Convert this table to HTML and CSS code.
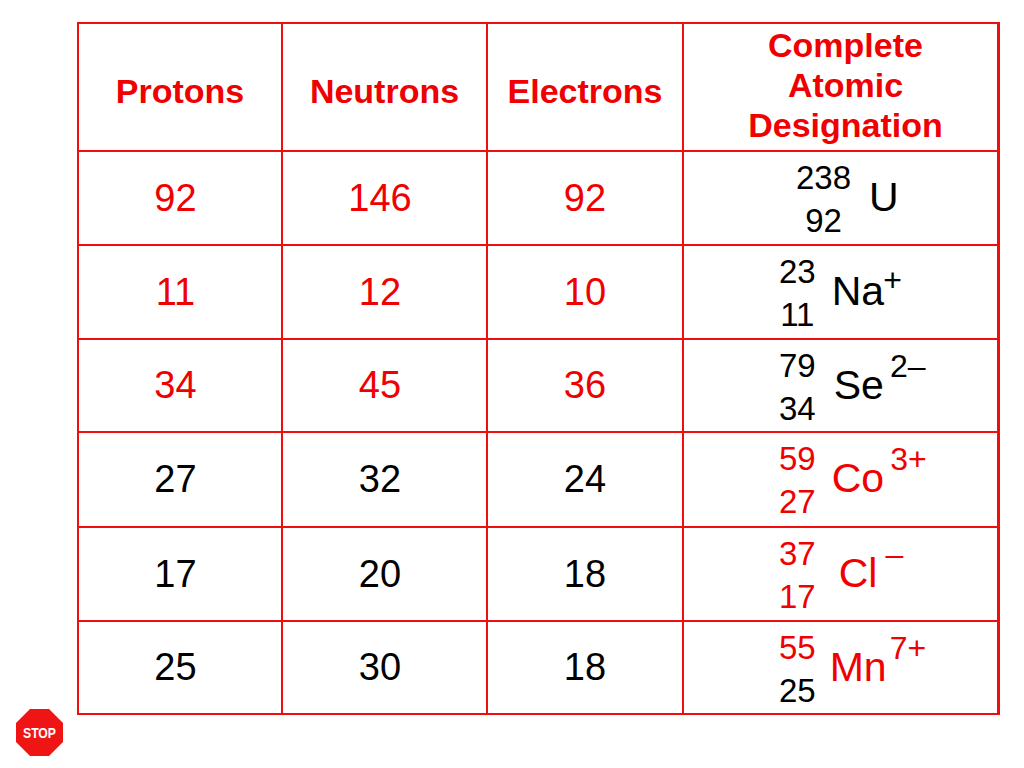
FILE: index.html
```html
<!DOCTYPE html>
<html lang="en">
<head>
<meta charset="utf-8">
<title>Atomic Designation</title>
<link rel="stylesheet" href="styles.css">
</head>
<body>
<div class="slide">
  <div class="grid">
    <div class="cell head">Protons</div>
    <div class="cell head">Neutrons</div>
    <div class="cell head">Electrons</div>
    <div class="cell head head-multi">Complete<br>Atomic<br>Designation</div>

    <div class="cell num shift red">92</div>
    <div class="cell num shift red">146</div>
    <div class="cell num red">92</div>
    <div class="cell iso iso-u">
      <div class="nums"><span>238</span><span>92</span></div>
      <span class="sym">U</span>
    </div>

    <div class="cell num shift red">11</div>
    <div class="cell num shift red">12</div>
    <div class="cell num red">10</div>
    <div class="cell iso">
      <div class="nums"><span>23</span><span>11</span></div>
      <span class="sym">Na</span>
      <span class="charge charge-na">+</span>
    </div>

    <div class="cell num shift red">34</div>
    <div class="cell num shift red">45</div>
    <div class="cell num red">36</div>
    <div class="cell iso">
      <div class="nums"><span>79</span><span>34</span></div>
      <span class="sym sym-se">Se</span>
      <span class="charge charge-se">2–</span>
    </div>

    <div class="cell num shift">27</div>
    <div class="cell num shift">32</div>
    <div class="cell num">24</div>
    <div class="cell iso red">
      <div class="nums"><span>59</span><span>27</span></div>
      <span class="sym">Co</span>
      <span class="charge charge-co">3+</span>
    </div>

    <div class="cell num shift">17</div>
    <div class="cell num shift">20</div>
    <div class="cell num">18</div>
    <div class="cell iso red">
      <div class="nums"><span>37</span><span>17</span></div>
      <span class="sym sym-cl">Cl</span>
      <span class="charge charge-cl">–</span>
    </div>

    <div class="cell num shift">25</div>
    <div class="cell num shift">30</div>
    <div class="cell num">18</div>
    <div class="cell iso red">
      <div class="nums"><span>55</span><span class="black">25</span></div>
      <span class="sym sym-mn">Mn</span>
      <span class="charge charge-mn">7+</span>
    </div>
  </div>

  <svg class="stop" width="47" height="47" viewBox="0 0 47 47" aria-label="STOP">
    <polygon points="14,0 33,0 47,14 47,33 33,47 14,47 0,33 0,14" fill="#f01515"/>
    <text x="23.5" y="29" text-anchor="middle" font-family="Liberation Sans, Arial, sans-serif" font-weight="bold" font-size="14" fill="#ffffff" textLength="33" lengthAdjust="spacingAndGlyphs">STOP</text>
  </svg>
</div>
</body>
</html>
```

FILE: styles.css
```css
html, body {
  margin: 0;
  padding: 0;
  background: #ffffff;
}

body {
  font-family: "Liberation Sans", Arial, Helvetica, sans-serif;
  color: #000000;
}

.slide {
  position: relative;
  width: 1024px;
  height: 768px;
  box-sizing: border-box;
  padding: 22px 0 0 77px;
}

.grid {
  display: grid;
  grid-template-columns: 202px 203px 194px 313px;
  grid-template-rows: 126px 92px 92px 91px 93px 92px 91px;
  gap: 2px;
  padding: 2px 3px 2px 2px;
  width: max-content;
  background: #f20d0d;
}

.cell {
  background: #ffffff;
  display: flex;
  align-items: center;
  justify-content: center;
  box-sizing: border-box;
}

.red {
  color: #f00000;
}

.black {
  color: #000000;
}

.head {
  color: #f00000;
  font-weight: bold;
  font-size: 34px;
  padding-top: 8px;
  text-align: center;
}

.head-multi {
  line-height: 40px;
  padding-top: 0;
  padding-bottom: 4px;
  padding-left: 10px;
}

.num {
  font-size: 38px;
}

.num.shift {
  padding-right: 9px;
}

.iso {
  justify-content: flex-start;
  align-items: flex-start;
  padding-left: 95px;
}

.iso-u {
  padding-left: 112px;
}

.nums {
  display: flex;
  flex-direction: column;
  align-items: center;
  font-size: 33px;
  line-height: 43px;
  padding-top: 4px;
}

.sym {
  font-size: 41px;
  line-height: 41px;
  margin-top: 25px;
  margin-left: 16px;
}

.sym-se {
  margin-left: 18px;
}

.sym-cl {
  margin-left: 23px;
}

.sym-mn {
  margin-left: 14px;
}

.iso-u .sym {
  margin-left: 18px;
}

.charge {
  font-size: 32px;
  line-height: 32px;
  margin-top: 10px;
}

.charge-na {
  margin-top: 18px;
  margin-left: -1px;
}

.charge-se,
.charge-co {
  margin-left: 6px;
}

.charge-cl {
  margin-left: 8px;
}

.charge-mn {
  margin-left: 3px;
}

.stop {
  position: absolute;
  left: 16px;
  top: 709px;
}
```
